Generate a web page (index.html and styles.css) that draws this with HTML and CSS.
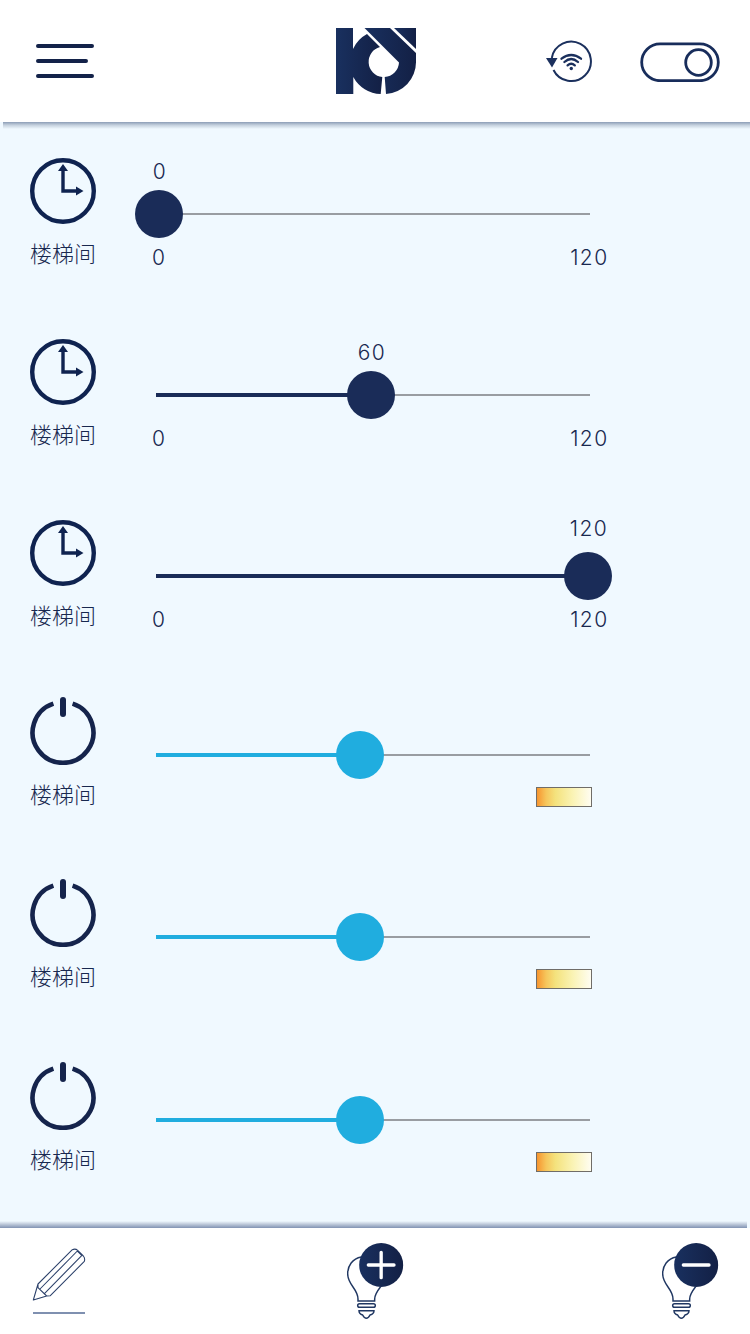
FILE: index.html
```html
<!DOCTYPE html>
<html lang="zh-CN">
<head>
<meta charset="utf-8">
<title>楼梯间</title>
<link rel="stylesheet" href="styles.css">
</head>
<body>
<svg class="sprite" aria-hidden="true">
  <defs>
    <linearGradient id="navy" x1="0" y1="0" x2="1" y2="0"><stop offset="0" stop-color="#19305f"/><stop offset="1" stop-color="#132045"/></linearGradient>
  </defs>
  <symbol id="clock" viewBox="0 0 66 66">
    <circle cx="33" cy="33" r="30.8" fill="none" stroke="#0f2350" stroke-width="4.4"/>
    <path d="M33 11V33H48" fill="none" stroke="#0f2350" stroke-width="3.4"/>
    <path d="M33 6L38 13H28ZM53.5 33L46 28.500V37.500Z" fill="#0f2350"/>
  </symbol>
  <symbol id="power" viewBox="0 0 66 68">
    <path d="M23.400 6.600A30.400 30.400 0 1 0 42.600 6.600" fill="none" stroke="#15244c" stroke-width="4.6"/>
    <path d="M33 3V17" stroke="#15244c" stroke-width="6" stroke-linecap="round"/>
  </symbol>
  <symbol id="bulb" viewBox="51 36 171 237">
    <g fill="none" stroke="#203762" stroke-width="4.4" stroke-linecap="butt">
      <path d="M94 81C67 86 53 107 53 131C53 165 84 176 84 207V213H134V207C134 193 142 183 152 170"/>
      <rect x="83" y="221" width="53" height="11" rx="5.5"/>
      <path d="M87 242H132C132 251 126 253 120 255C117 261 115 265 109 265C103 265 101 261 98 255C92 253 87 251 87 242Z"/>
    </g>
    <circle cx="153.500" cy="105" r="66" fill="url(#navy)" stroke="none"/>
  </symbol>
</svg>

<header class="topbar">
  <svg class="menu" viewBox="0 0 58 34"><path d="M2 2H56M2 17H50M2 32H56"/></svg>
  <svg class="logo" viewBox="0 0 80 66" fill="url(#navy)">
    <path d="M0 0H17V21A32 32 0 0 1 31 6L44 19A15.300 15.300 0 0 0 46.300 49L44.700 66A32 32 0 0 1 17.300 49V66H0Z"/>
    <path d="M28.500 0H54L80 25V34A32 32 0 0 1 50 66L48.700 49A15.300 15.300 0 0 0 63 34.500Z"/>
    <path d="M58 0H80V21Z"/>
  </svg>
  <svg class="sync" viewBox="546 40 47 43">
    <path class="line" d="M551.800 58A19.700 19.700 0 1 1 553.500 70"/>
    <path class="solid" d="M546 58H557.500L552 67.500Z"/>
    <path class="wave" d="M561.500 58.700Q571.200 51.300 581 58.700M564.400 62Q571.200 56 578 62M567.600 65.400Q571.200 62.200 574.800 65.400"/>
    <circle class="solid" cx="571.300" cy="68.500" r="1.700"/>
  </svg>
  <svg class="toggle" viewBox="0 0 80 40"><rect x="1.700" y="1.900" width="76.600" height="36.800" rx="18.400"/><circle cx="58.500" cy="20.500" r="12.800"/></svg>
</header>

<main class="devices">
  <section class="row timer">
    <div class="device"><svg><use href="#clock"/></svg><span>楼梯间</span></div>
    <div class="control">
      <div class="slider" style="--pos:3px"><output>0</output><i></i></div>
      <div class="scale"><span>0</span><span>120</span></div>
    </div>
  </section>
  <section class="row timer">
    <div class="device"><svg><use href="#clock"/></svg><span>楼梯间</span></div>
    <div class="control">
      <div class="slider" style="--pos:215px"><output>60</output><i></i></div>
      <div class="scale"><span>0</span><span>120</span></div>
    </div>
  </section>
  <section class="row timer last">
    <div class="device"><svg><use href="#clock"/></svg><span>楼梯间</span></div>
    <div class="control">
      <div class="slider full" style="--pos:432px"><output>120</output><i></i></div>
      <div class="scale"><span>0</span><span>120</span></div>
    </div>
  </section>
  <section class="row lamp">
    <div class="device"><svg><use href="#power"/></svg><span>楼梯间</span></div>
    <div class="control">
      <div class="slider" style="--pos:204px"><i></i></div>
      <div class="warmth"></div>
    </div>
  </section>
  <section class="row lamp middle">
    <div class="device"><svg><use href="#power"/></svg><span>楼梯间</span></div>
    <div class="control">
      <div class="slider" style="--pos:204px"><i></i></div>
      <div class="warmth"></div>
    </div>
  </section>
  <section class="row lamp">
    <div class="device"><svg><use href="#power"/></svg><span>楼梯间</span></div>
    <div class="control">
      <div class="slider" style="--pos:204px"><i></i></div>
      <div class="warmth"></div>
    </div>
  </section>
</main>

<footer class="actions">
  <svg class="pencil" viewBox="96 111 162 204">
    <path d="M100 270L114 222L217 119Q226 115 233 121L250 138Q256 145 253 154L151 257L140 258ZM114 233L140 258M120 237L232 123M134 250L245 137M114 222V233M232 123L246 137"/>
    <path class="rule" d="M99 309H255"/>
  </svg>
  <svg class="bulb add" viewBox="51 36 171 237"><use href="#bulb" x="51" y="36" width="171" height="237"/><path d="M153.500 67V143M115 105H192"/></svg>
  <svg class="bulb" viewBox="51 36 171 237"><use href="#bulb" x="51" y="36" width="171" height="237"/><path d="M115 105H192"/></svg>
</footer>
</body>
</html>
```

FILE: styles.css
```css
* { box-sizing: border-box; }
body {
  margin: 0;
  width: 750px;
  height: 1334px;
  display: flex;
  flex-direction: column;
  overflow: hidden;
  background: #f0f9ff;
  color: #18284f;
  font-family: Inter, "Noto Sans CJK SC", sans-serif;
  font-weight: 300;
}
svg { display: block; flex: none; }
.sprite { position: absolute; width: 0; height: 0; }

.topbar {
  height: 122px;
  flex: none;
  display: flex;
  align-items: flex-start;
  padding: 28px 30px 0 36px;
  background: #fff;
}
.menu { width: 58px; height: 34px; margin-top: 16px; fill: none; stroke: #132249; stroke-width: 4; stroke-linecap: round; }
.logo { width: 80px; height: 66px; margin-left: 242px; }
.sync { width: 47px; height: 43px; margin: 12px 0 0 130px; }
.sync .line, .sync .wave { fill: none; stroke: #1b305d; stroke-width: 2; }
.sync .wave { stroke-width: 2.3; stroke-linecap: round; }
.sync .solid { fill: #1b305d; }
.toggle { width: 80px; height: 40px; margin: 14px 0 0 47px; fill: none; stroke: #182d5b; stroke-width: 2.8; }

.devices {
  height: 1106px;
  flex: none;
  padding: 36px 0 0 30px;
  background:
    linear-gradient(#8c9db6, #c5d1de 45%, #f0f9ff) 3px 0 / 750px 7px no-repeat,
    linear-gradient(#f0f9ff, #b9c5d7 50%, #8193b3) 0 100% / 747px 7px no-repeat,
    #f0f9ff;
}
.row { display: flex; height: 181px; }
.row.last { height: 179px; }
.row.lamp { height: 182px; }
.row.middle { height: 183px; }
.device { width: 66px; display: flex; flex-direction: column; align-items: center; }
.device svg { width: 66px; height: 66px; }
.lamp .device svg { height: 68px; margin-top: -2px; }
.device span {
  margin-top: 12px;
  font: 300 22px/32px "Noto Sans CJK SC", sans-serif;
  white-space: nowrap;
}

.control { width: 434px; margin-left: 60px; padding-top: 54px; }
.slider {
  --tone: #1a2c58;
  position: relative;
  height: 4px;
  background:
    linear-gradient(var(--tone), var(--tone)) 0 0 / var(--pos) 4px no-repeat,
    linear-gradient(#999da2, #999da2) 0 1px / 100% 2px no-repeat;
}
.lamp .slider { --tone: #20addf; }
.slider i {
  position: absolute;
  left: calc(var(--pos) - 24px);
  top: -22px;
  width: 48px;
  height: 48px;
  border-radius: 50%;
  background: var(--tone);
}
.slider output {
  position: absolute;
  left: calc(var(--pos) - 29px);
  bottom: 32px;
  width: 60px;
  text-align: center;
}
.slider.full output { bottom: 37px; }
.slider output, .scale { font-size: 21px; line-height: 24px; letter-spacing: 1.4px; }
.scale { display: flex; justify-content: space-between; margin: 30px -18.5px 0 -4px; }
.warmth {
  width: 56px;
  height: 20px;
  margin: 30px -2px 0 auto;
  border: 1.5px solid #706d68;
  background: linear-gradient(90deg, #f7952f, #f6c65c 17%, #f4e27d 34%, #faf3b4 66%, #fffdf1);
}

.actions {
  height: 106px;
  flex: none;
  display: flex;
  justify-content: space-between;
  padding: 14px 31px 0 32px;
  background: #fff;
}
.pencil { width: 54px; height: 68px; margin-top: 5px; fill: none; stroke: #2b406a; stroke-width: 3.2; stroke-linejoin: round; }
.pencil .rule { stroke: #546b96; stroke-width: 4.5; }
.bulb { width: 57px; height: 79px; fill: none; stroke: #fff; stroke-width: 10; stroke-linecap: round; }
.bulb.add { margin-left: 3px; }
```
